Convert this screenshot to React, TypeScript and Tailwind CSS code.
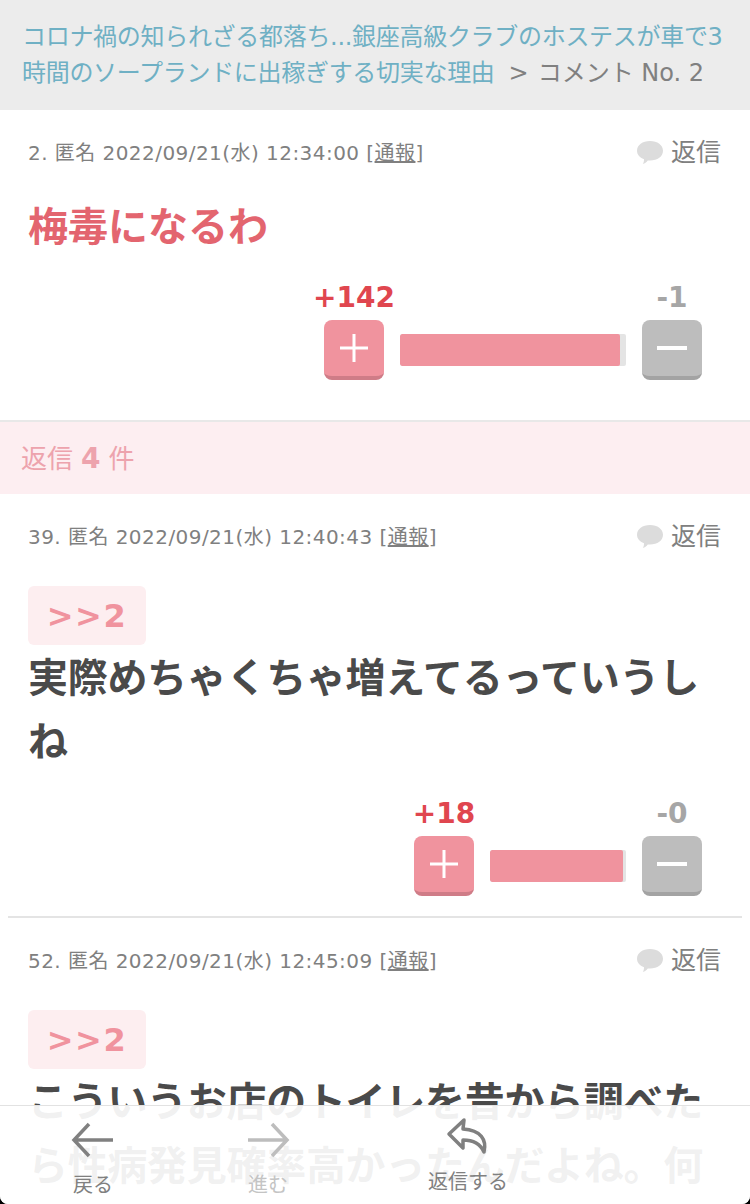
const font = { fontFamily: '"DejaVu Sans", "Noto Sans CJK JP", sans-serif' };

function Bubble() {
  return (
    <svg width="28" height="26" viewBox="0 0 28 26" className="block -ml-[1px]">
      <path d="M14 1c7.500 0 13 4 13 9.800s-5.500 9.800-13 9.800c-.8 0-1.500 0-2.200-.1-1.300 1.700-3 3-5 3.500 1-1.500 1.200-3 1.200-4.800C3.500 17.500 1 14.500 1 10.800 1 5 6.500 1 14 1z" fill="#dcdcdc" />
    </svg>
  );
}

function MetaRow({ no, date }: { no: number; date: string }) {
  return (
    <div className="flex items-center justify-between pl-[28px] pr-[29px] pt-[27px]">
      <p className="text-[20px] leading-[28px] text-[#808080] tracking-[0.45px]">
        {no}. 匿名 {date} [<span className="underline">通報</span>]
      </p>
      <div className="flex items-center gap-[7px]">
        <Bubble />
        <span className="text-[25px] leading-[32px] text-[#808080]">返信</span>
      </div>
    </div>
  );
}

function VoteBar({ plus, minus, barWidth, fillGap }: { plus: string; minus: string; barWidth: string; fillGap: string }) {
  return (
    <div className="flex justify-end pr-[48px]">
      <div className="flex flex-col">
        <div className="flex justify-between text-[28px] leading-[30px] font-bold">
          <span className="w-[60px] whitespace-nowrap text-[#e0464f] flex justify-center">{plus}</span>
          <span className="w-[60px] text-center text-[#a6a6a6]">{minus}</span>
        </div>
        <div className="flex items-start gap-[16px] mt-[7px]">
          <div className="w-[60px] h-[60px] rounded-[8px] bg-[#f0939e] border-b-[4px] border-[#cf7c87] flex items-center justify-center">
            <svg width="30" height="30" viewBox="0 0 30 30"><path d="M15 1v28M1 15h28" stroke="#fff" strokeWidth="3" /></svg>
          </div>
          <div className={`${barWidth} h-[32px] mt-[14px] bg-[#e4e4e4] rounded-[2px] overflow-hidden flex`}>
            <div className={`flex-1 ${fillGap} bg-[#f0939e] rounded-[2px]`} />
          </div>
          <div className="w-[60px] h-[60px] rounded-[8px] bg-[#bdbdbd] border-b-[4px] border-[#a3a3a3] flex items-center justify-center">
            <svg width="30" height="30" viewBox="0 0 30 30"><path d="M0 15h30" stroke="#fff" strokeWidth="4" /></svg>
          </div>
        </div>
      </div>
    </div>
  );
}

function Anchor() {
  return (
    <div className="ml-[28px] mt-[33px] w-[118px] h-[59px] rounded-[6px] bg-[#fdeef0] flex items-center justify-center text-[32px] font-bold text-[#f0939e] tracking-[1.500px]">
      &gt;&gt;2
    </div>
  );
}

function FooterItem({ label, muted, children, width }: { label: string; muted?: boolean; children: React.ReactNode; width: string }) {
  return (
    <div className={`${width} flex flex-col items-center`}>
      {children}
      <span className={`mt-[14px] text-[20px] leading-[26px] ${muted ? 'text-[#c4c4c4]' : 'text-[#808080]'}`}>{label}</span>
    </div>
  );
}

export default function App() {
  return (
    <div className="w-[750px] h-[1204px] bg-black" style={font}>
      <div className="relative h-full overflow-hidden bg-white rounded-b-[8px]">
        <header className="h-[110px] bg-[#ececec] pl-[22px] pr-[20px] pt-[19px] text-[24px] leading-[36px]">
          <a className="text-[#6fb0c4] tracking-[-0.3px]">コロナ禍の知られざる都落ち...銀座高級クラブのホステスが車で3時間のソープランドに出稼ぎする切実な理由</a>
          <span className="text-[#808080] ml-[14px]">&gt;</span>
          <span className="text-[#808080] ml-[9px]">コメント No. 2</span>
        </header>

        <section className="h-[312px] border-b-2 border-[#e8e8e8]">
          <MetaRow no={2} date="2022/09/21(水) 12:34:00" />
          <p className="pl-[28px] mt-[32px] h-[82px] text-[40px] leading-[52px] font-bold text-[#e3656f]">梅毒になるわ</p>
          <VoteBar plus="+142" minus="-1" barWidth="w-[226px]" fillGap="mr-[6px]" />
        </section>

        <div className="h-[72px] bg-[#fdeef1] pl-[21px] pt-[2px] flex items-center gap-[8px] text-[26px] text-[#eda3ad]">
          <span>返信</span>
          <b className="text-[28px]">4</b>
          <span>件</span>
        </div>

        <section className="h-[422px]">
          <MetaRow no={39} date="2022/09/21(水) 12:40:43" />
          <Anchor />
          <p className="px-[28px] mt-[1px] text-[40px] leading-[64px] font-bold tracking-[-0.3px] text-[#4a4a4a]">実際めちゃくちゃ増えてるっていうしね</p>
          <div className="mt-[25px]">
            <VoteBar plus="+18" minus="-0" barWidth="w-[136px]" fillGap="mr-[3px]" />
          </div>
        </section>
        <div className="mx-[8px] h-[2px] bg-[#e4e4e4]" />

        <section>
          <MetaRow no={52} date="2022/09/21(水) 12:45:09" />
          <Anchor />
          <p className="px-[28px] mt-[1px] text-[40px] leading-[64px] font-bold tracking-[-0.3px] text-[#4a4a4a]">こういうお店のトイレを昔から調べたら性病発見確率高かったんだよね。何</p>
        </section>

        {/* bottom toolbar over the page */}
        <footer className="absolute left-0 right-0 bottom-0 h-[99px] bg-white/92 border-t border-[#e2e2e2] flex items-start">
          <FooterItem label="戻る" width="w-[186px] pt-[16px]">
            <svg width="44" height="36" viewBox="0 0 44 36" fill="none"><path d="M42 18H3M18 2 3 18l15 16" stroke="#808080" strokeWidth="3.500" /></svg>
          </FooterItem>
          <FooterItem label="進む" muted width="w-[164px] pt-[16px]">
            <svg width="44" height="36" viewBox="0 0 44 36" fill="none"><path d="M2 18h39M26 2l15 16-15 16" stroke="#bdbdbd" strokeWidth="3.500" /></svg>
          </FooterItem>
          <FooterItem label="返信する" width="w-[236px] pt-[11px]">
            <svg width="44" height="38" viewBox="0 0 44 38" fill="none"><path d="M18 3 3 17l14 14v-8c10 0 17 3 21 12 3-12-3-22-21-23z" stroke="#808080" strokeWidth="3.500" strokeLinejoin="round" /></svg>
          </FooterItem>
        </footer>
      </div>
    </div>
  );
}
